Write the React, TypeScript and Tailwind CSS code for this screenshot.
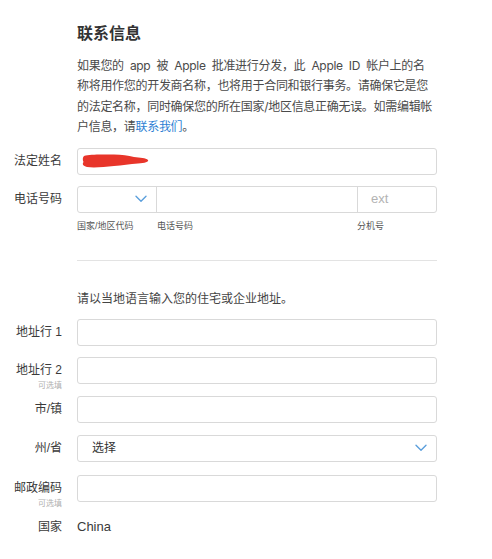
import React from "react";

const font = { fontFamily: '"Liberation Sans", "Noto Sans CJK SC", sans-serif' };

function Chevron() {
  return (
    <svg width="12" height="8" viewBox="0 0 12 8" fill="none">
      <path d="M1 1.2 L6 6.2 L11 1.2" stroke="#5b9fdc" strokeWidth="1.4" strokeLinecap="round" strokeLinejoin="round" />
    </svg>
  );
}

function Label({ text, sub }: { text: string; sub?: string }) {
  return (
    <div className="w-[62px] shrink-0 flex flex-col items-end h-[27px]">
      <div className="text-[12px] leading-[27px] text-[#3a3a3a] whitespace-nowrap">{text}</div>
      {sub && <div className="text-[8px] leading-[8px] -mt-[2px] text-[#b0b0b0] whitespace-nowrap">{sub}</div>}
    </div>
  );
}

function Row({ label, sub, children, className = "" }: { label: string; sub?: string; children?: React.ReactNode; className?: string }) {
  return (
    <div className={"flex items-start h-[27px] " + className}>
      <Label text={label} sub={sub} />
      <div className="ml-[15px] w-[360px] h-[27px]">{children}</div>
    </div>
  );
}

function Input({ children }: { children?: React.ReactNode }) {
  return (
    <div className="w-full h-full border border-[#d9d9d9] rounded-[3px] bg-white flex items-center">{children}</div>
  );
}

export default function App() {
  return (
    <div className="w-[492px] h-[559px] bg-white overflow-hidden" style={font}>
      <div className="pl-[77px] pt-[22px] w-[440px]">
        <h1 className="text-[16px] leading-[24px] font-bold text-[#333]">联系信息</h1>
        <p
          className="mt-[10px] text-[12px] leading-[20.4px] text-[#4a4a4a] whitespace-nowrap tracking-[-0.3px] [word-spacing:3px]"
          style={{ fontFamily: 'Inter, "Noto Sans CJK SC", sans-serif' }}
        >
          如果您的 app 被 Apple 批准进行分发，此 Apple ID 帐户上的名
          <br />
          称将用作您的开发商名称，也将用于合同和银行事务。请确保它是您
          <br />
          的法定名称，同时确保您的所在国家/地区信息正确无误。如需编辑帐
          <br />
          户信息，请<span className="text-[#2d7fd4]">联系我们</span>。
        </p>
      </div>

      <Row label="法定姓名" className="mt-[10px]">
        <Input>
          <svg width="68" height="16" viewBox="0 0 68 16" className="ml-[4px]">
            <path
              d="M2 3 C 8 1, 20 1.5, 32 1.5 C 40 1.5, 46 2.5, 52 4 C 58 4.5, 64 5, 66 7 C 67 9, 63 10, 56 10.5 C 48 11, 40 12.5, 32 13 C 22 14, 12 15, 5 14 C 1 13, 0 11, 1.5 9 C 0.5 7, 0.5 4.5, 2 3 Z"
              fill="#e8352a"
            />
          </svg>
        </Input>
      </Row>

      <Row label="电话号码" className="mt-[11px]">
        <div className="w-full h-full border border-[#d9d9d9] rounded-[3px] flex">
          <div className="w-[79px] h-full border-r border-[#d9d9d9] flex items-center justify-end pr-[9px]">
            <Chevron />
          </div>
          <div className="w-[201px] h-full border-r border-[#d9d9d9]" />
          <div className="flex-1 h-full flex items-center pl-[13px] text-[13px] text-[#b3b3b3]">ext</div>
        </div>
      </Row>

      <div className="ml-[77px] w-[360px] flex mt-[7px] text-[9px] leading-[12px] text-[#555]">
        <div className="w-[80px]">国家/地区代码</div>
        <div className="w-[200px]">电话号码</div>
        <div>分机号</div>
      </div>

      <div className="ml-[77px] w-[360px] h-px bg-[#e3e3e3] mt-[28px]" />

      <div className="ml-[77px] mt-[29px] text-[12px] leading-[18px] text-[#444]">请以当地语言输入您的住宅或企业地址。</div>

      <Row label="地址行 1" className="mt-[11px]">
        <Input />
      </Row>
      <Row label="地址行 2" sub="可选填" className="mt-[11px]">
        <Input />
      </Row>
      <Row label="市/镇" className="mt-[12px]">
        <Input />
      </Row>
      <Row label="州/省" className="mt-[12px]">
        <Input>
          <span className="ml-[14px] text-[12px] text-[#333]">选择</span>
          <span className="ml-auto mr-[9px] flex">
            <Chevron />
          </span>
        </Input>
      </Row>
      <Row label="邮政编码" sub="可选填" className="mt-[13px]">
        <Input />
      </Row>

      <div className="flex items-center mt-[15px] h-[20px]">
        <div className="w-[62px] text-right text-[12px] text-[#3a3a3a]">国家</div>
        <div className="ml-[15px] text-[13px] text-[#3a3a3a]">China</div>
      </div>
    </div>
  );
}
